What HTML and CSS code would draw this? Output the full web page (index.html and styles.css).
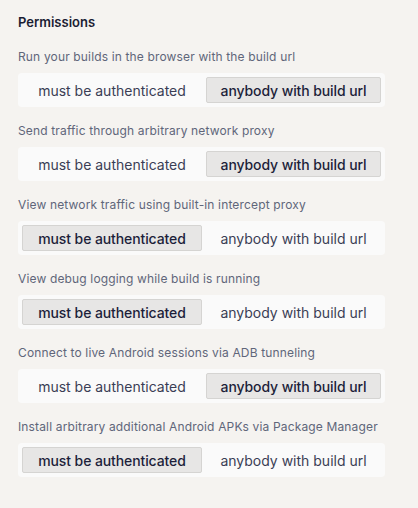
FILE: index.html
```html
<!DOCTYPE html>
<html>
<head>
<meta charset="utf-8">
<link rel="stylesheet" href="styles.css">
</head>
<body>
<div class="panel">
  <h2 class="title">Permissions</h2>
  <div class="list">
    <div class="item">
      <div class="label">Run your builds in the browser with the build url</div>
      <div class="seg">
        <div class="opt">must be authenticated</div>
        <div class="opt on">anybody with build url</div>
      </div>
    </div>
    <div class="item">
      <div class="label">Send traffic through arbitrary network proxy</div>
      <div class="seg">
        <div class="opt">must be authenticated</div>
        <div class="opt on">anybody with build url</div>
      </div>
    </div>
    <div class="item">
      <div class="label">View network traffic using built-in intercept proxy</div>
      <div class="seg">
        <div class="opt on">must be authenticated</div>
        <div class="opt">anybody with build url</div>
      </div>
    </div>
    <div class="item">
      <div class="label">View debug logging while build is running</div>
      <div class="seg">
        <div class="opt on">must be authenticated</div>
        <div class="opt">anybody with build url</div>
      </div>
    </div>
    <div class="item">
      <div class="label">Connect to live Android sessions via ADB tunneling</div>
      <div class="seg">
        <div class="opt">must be authenticated</div>
        <div class="opt on">anybody with build url</div>
      </div>
    </div>
    <div class="item">
      <div class="label">Install arbitrary additional Android APKs via Package Manager</div>
      <div class="seg">
        <div class="opt on">must be authenticated</div>
        <div class="opt">anybody with build url</div>
      </div>
    </div>
  </div>
</div>
</body>
</html>
```
FILE: styles.css
```css
html, body {
  margin: 0;
  padding: 0;
  background: #f5f3f0;
}
body {
  font-family: Inter, "Noto Sans", sans-serif;
  width: 418px;
  height: 508px;
}
.panel {
  padding: 12px 33px 0 18px;
}
.title {
  margin: 0 0 17px 0;
  font-size: 13px;
  line-height: 20px;
  font-weight: 600;
  color: #1b1d33;
}
.list {
  display: flex;
  flex-direction: column;
  gap: 16px;
}
.item {
  display: flex;
  flex-direction: column;
  gap: 8px;
}
.label {
  font-size: 12px;
  line-height: 16px;
  letter-spacing: 0.15px;
  color: #60667a;
}
.seg {
  display: grid;
  grid-template-columns: 180px 175px;
  gap: 4px;
  padding: 4px;
  height: 26px;
  background: #fafafa;
  border-radius: 4px;
}
.opt {
  display: flex;
  align-items: center;
  justify-content: center;
  font-size: 14px;
  color: #3a3e55;
  border: 1px solid transparent;
  border-radius: 2px;
}
.opt.on {
  background: #e7e6e5;
  border-color: #d5d4d2;
  color: #1d1f3a;
  font-weight: 500;
  letter-spacing: -0.1px;
}
```
